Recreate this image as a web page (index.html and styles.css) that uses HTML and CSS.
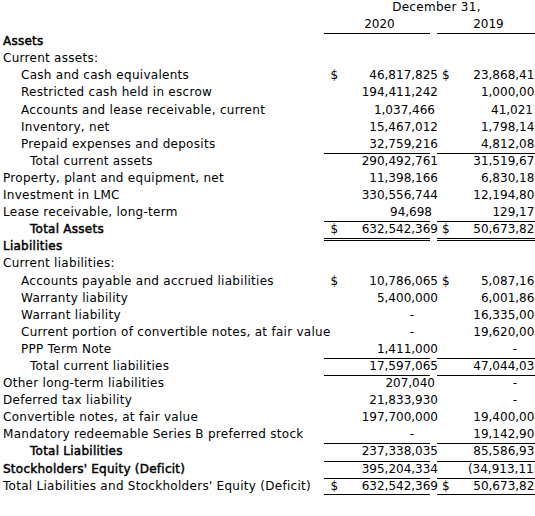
FILE: index.html
```html
<!DOCTYPE html>
<html>
<head>
<meta charset="utf-8">
<link rel="stylesheet" href="styles.css">
</head>
<body>
<div class="sheet">
  <div class="row"><div class="lbl"></div><div class="hdr">December 31,</div></div>
  <div class="row"><div class="lbl"></div><div class="yr va u">2020</div><div class="yr vb u">2019</div></div>
  <div class="row"><div class="lbl b">Assets</div></div>
  <div class="row"><div class="lbl">Current assets:</div></div>
  <div class="row"><div class="lbl l1">Cash and cash equivalents</div><div class="val va"><span class="cur">$</span><span class="num">46,817,825</span></div><div class="val vb"><span class="cur">$</span><span class="num">23,868,417</span></div></div>
  <div class="row"><div class="lbl l1">Restricted cash held in escrow</div><div class="val va"><span class="num">194,411,242</span></div><div class="val vb"><span class="num">1,000,000</span></div></div>
  <div class="row"><div class="lbl l1">Accounts and lease receivable, current</div><div class="val va"><span class="num short">1,037,466</span></div><div class="val vb"><span class="num short">41,021</span></div></div>
  <div class="row"><div class="lbl l1">Inventory, net</div><div class="val va"><span class="num">15,467,012</span></div><div class="val vb"><span class="num">1,798,146</span></div></div>
  <div class="row"><div class="lbl l1">Prepaid expenses and deposits</div><div class="val va u"><span class="num">32,759,216</span></div><div class="val vb u"><span class="num">4,812,088</span></div></div>
  <div class="row"><div class="lbl l2">Total current assets</div><div class="val va"><span class="num">290,492,761</span></div><div class="val vb"><span class="num">31,519,672</span></div></div>
  <div class="row"><div class="lbl">Property, plant and equipment, net</div><div class="val va"><span class="num">11,398,166</span></div><div class="val vb"><span class="num">6,830,187</span></div></div>
  <div class="row"><div class="lbl">Investment in LMC</div><div class="val va"><span class="num">330,556,744</span></div><div class="val vb"><span class="num">12,194,800</span></div></div>
  <div class="row"><div class="lbl">Lease receivable, long-term</div><div class="val va u"><span class="num shorter">94,698</span></div><div class="val vb u"><span class="num">129,177</span></div></div>
  <div class="row"><div class="lbl l2 b">Total Assets</div><div class="val va uu"><span class="cur">$</span><span class="num">632,542,369</span></div><div class="val vb uu"><span class="cur">$</span><span class="num">50,673,826</span></div></div>
  <div class="row"><div class="lbl b">Liabilities</div></div>
  <div class="row"><div class="lbl">Current liabilities:</div></div>
  <div class="row"><div class="lbl l1">Accounts payable and accrued liabilities</div><div class="val va"><span class="cur">$</span><span class="num">10,786,065</span></div><div class="val vb"><span class="cur">$</span><span class="num">5,087,167</span></div></div>
  <div class="row"><div class="lbl l1">Warranty liability</div><div class="val va"><span class="num">5,400,000</span></div><div class="val vb"><span class="num">6,001,864</span></div></div>
  <div class="row"><div class="lbl l1">Warrant liability</div><div class="val va"><span class="num dash">-</span></div><div class="val vb"><span class="num">16,335,000</span></div></div>
  <div class="row"><div class="lbl l1">Current portion of convertible notes, at fair value</div><div class="val va"><span class="num dash">-</span></div><div class="val vb"><span class="num">19,620,000</span></div></div>
  <div class="row"><div class="lbl l1">PPP Term Note</div><div class="val va u"><span class="num">1,411,000</span></div><div class="val vb u"><span class="num dash">-</span></div></div>
  <div class="row"><div class="lbl l2">Total current liabilities</div><div class="val va u"><span class="num">17,597,065</span></div><div class="val vb u"><span class="num">47,044,031</span></div></div>
  <div class="row"><div class="lbl">Other long-term liabilities</div><div class="val va"><span class="num short">207,040</span></div><div class="val vb"><span class="num dash">-</span></div></div>
  <div class="row"><div class="lbl">Deferred tax liability</div><div class="val va"><span class="num">21,833,930</span></div><div class="val vb"><span class="num dash">-</span></div></div>
  <div class="row"><div class="lbl">Convertible notes, at fair value</div><div class="val va"><span class="num">197,700,000</span></div><div class="val vb"><span class="num">19,400,000</span></div></div>
  <div class="row"><div class="lbl">Mandatory redeemable Series B preferred stock</div><div class="val va u"><span class="num dash">-</span></div><div class="val vb u"><span class="num">19,142,900</span></div></div>
  <div class="row"><div class="lbl l2 b">Total Liabilities</div><div class="val va u"><span class="num">237,338,035</span></div><div class="val vb u"><span class="num">85,586,931</span></div></div>
  <div class="row"><div class="lbl b">Stockholders' Equity (Deficit)</div><div class="val va u"><span class="num">395,204,334</span></div><div class="val vb u"><span class="num">(34,913,115<span class="paren">)</span></span></div></div>
  <div class="row"><div class="lbl">Total Liabilities and Stockholders' Equity (Deficit)</div><div class="val va uu"><span class="cur">$</span><span class="num">632,542,369</span></div><div class="val vb uu"><span class="cur">$</span><span class="num">50,673,826</span></div></div>
</div>
</body>
</html>
```

FILE: styles.css
```css
html, body {
  margin: 0;
  padding: 0;
  overflow: hidden;
  background: #fff;
}

body {
  font-family: "DejaVu Sans", sans-serif;
  font-size: 12px;
  color: #000;
}

.row {
  display: grid;
  grid-template-columns: 324px 106px 7px 98px;
  height: 17.1px;
  line-height: 15.5px;
}

.lbl {
  grid-column: 1;
  white-space: nowrap;
  letter-spacing: 0.28px;
  padding-left: 3px;
}

.l1 { padding-left: 21px; }
.l2 { padding-left: 30px; }

.b {
  letter-spacing: 0.25px;
  -webkit-text-stroke: 0.45px #000;
}

.hdr {
  grid-column: 2 / 5;
  text-align: center;
  padding-left: 14px;
  letter-spacing: 0.3px;
}

.yr {
  text-align: center;
  padding-left: 5px;
  box-sizing: border-box;
}

.va { grid-column: 2; }
.vb { grid-column: 4; }

.val {
  display: flex;
  box-sizing: border-box;
  white-space: nowrap;
}

.cur { padding-left: 6.5px; }
.vb .cur { padding-left: 5px; }

.num {
  margin-left: auto;
  margin-right: -8px;
}
.vb .num { margin-right: -7px; }

.va .short { margin-right: -5px; }
.vb .short { margin-right: 2px; }
.va .shorter { margin-right: -2px; }

.va .dash { margin-right: 16px; }
.vb .dash { margin-right: 18px; }

.paren {
  margin-right: -4px;
}

.u { border-bottom: 1px solid #000; }
.uu { border-bottom: 3px double #000; }
```
